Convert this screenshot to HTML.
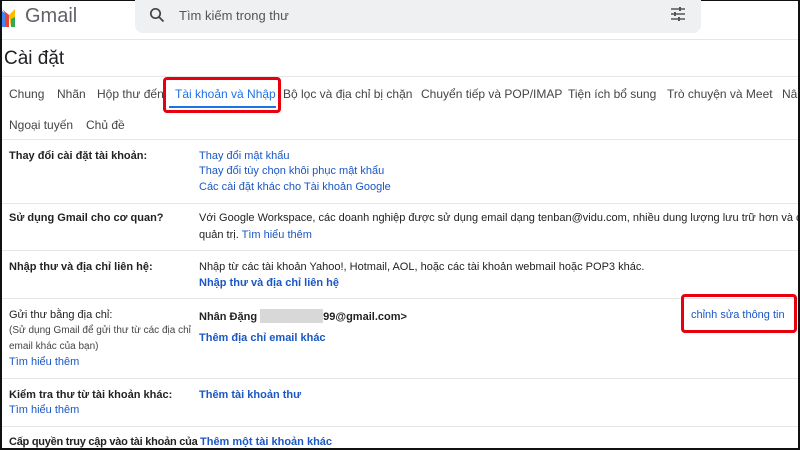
<!DOCTYPE html>
<html><head><meta charset="utf-8"><style>
*{margin:0;padding:0;box-sizing:border-box}
body{width:800px;height:450px;overflow:hidden;background:#fff;font-family:"Liberation Sans",Arial,sans-serif;position:relative;color:#202124}
.a{position:absolute;white-space:nowrap}
.hr{position:absolute;left:0;width:800px;height:1px;background:#e6e6e6}
.lb{font-size:11px;font-weight:bold;color:#222}
.lk{font-size:11px;color:#1a57c4}
.bl{font-size:11px;color:#1a57c4;font-weight:bold}
.sm{font-size:10px;color:#444}
.tab{font-size:12px;color:#444;top:87px}
.tab2{font-size:12px;color:#444;top:118px}
</style></head><body>
<div class="a" style="left:0;top:0;width:800px;height:1px;background:#111"></div>
<svg class="a" style="left:2px;top:5px" width="14" height="22" viewBox="0 0 14 22"><path d="M0 4 L7 10 L7 22 L3 22 L3 8 Z" fill="#ea4335"/><path d="M7 10 L13 4 L13 22 L9 22 Z" fill="#fbbc04"/><path d="M9 22 L13 22 L13 12 L9 14Z" fill="#34a853"/><path d="M0 6 L0 22 L3 22 L3 8Z" fill="#4285f4"/></svg>
<div class="a" style="left:25px;top:5px;font-size:20px;color:#5f6368">Gmail</div>
<div class="a" style="left:135px;top:0;width:566px;height:33px;background:#eef0f2;border-radius:0 0 8px 8px"></div>
<svg class="a" style="left:149px;top:7px" width="16" height="16" viewBox="0 0 16 16"><circle cx="6.5" cy="6.5" r="4.7" fill="none" stroke="#444" stroke-width="1.7"/><path d="M10 10 L14.5 14.5" stroke="#444" stroke-width="1.8"/></svg>
<div class="a" style="left:179px;top:8px;font-size:13px;color:#555">Tìm kiếm trong thư</div>
<svg class="a" style="left:670px;top:7px" width="16" height="14" viewBox="0 0 16 14"><g stroke="#555" stroke-width="1.5"><path d="M1 2h14M1 7h14M1 12h14"/></g><g stroke="#555" stroke-width="2"><path d="M10 0v4M5 5v4M9 10v4"/></g></svg>
<div class="hr" style="top:39px"></div>
<div class="a" style="left:4px;top:48px;font-size:19px;color:#202124">Cài đặt</div>
<div class="hr" style="top:76px"></div>
<div class="a tab" style="left:9px">Chung</div>
<div class="a tab" style="left:57px">Nhãn</div>
<div class="a tab" style="left:97px">Hộp thư đến</div>
<div class="a tab" style="left:175px;color:#1a73e8">Tài khoản và Nhập</div>
<div class="a" style="left:169px;top:106px;width:107px;height:2px;background:#1a73e8"></div>
<div class="a" style="left:163px;top:77px;width:118px;height:36px;border:3px solid #e8000e;border-radius:4px"></div>
<div class="a tab" style="left:283px">Bộ lọc và địa chỉ bị chặn</div>
<div class="a tab" style="left:421px">Chuyển tiếp và POP/IMAP</div>
<div class="a tab" style="left:568px">Tiện ích bổ sung</div>
<div class="a tab" style="left:667px">Trò chuyện và Meet</div>
<div class="a tab" style="left:782px">Nâng</div>
<div class="a tab2" style="left:9px">Ngoại tuyến</div>
<div class="a tab2" style="left:86px">Chủ đề</div>
<div class="hr" style="top:139px"></div>

<div class="a lb" style="left:9px;top:150px">Thay đổi cài đặt tài khoản:</div>
<div class="a lk" style="left:199px;top:150px">Thay đổi mật khẩu</div>
<div class="a lk" style="left:199px;top:165px">Thay đổi tùy chọn khôi phục mật khẩu</div>
<div class="a lk" style="left:199px;top:181px">Các cài đặt khác cho Tài khoản Google</div>
<div class="hr" style="top:203px"></div>

<div class="a lb" style="left:9px;top:212px">Sử dụng Gmail cho cơ quan?</div>
<div class="a" style="left:199px;top:212px;font-size:11px;color:#222">Với Google Workspace, các doanh nghiệp được sử dụng email dạng tenban@vidu.com, nhiều dung lượng lưu trữ hơn và c</div>
<div class="a" style="left:199px;top:229px;font-size:11px;color:#222">quản trị. <span style="color:#1a57c4">Tìm hiểu thêm</span></div>
<div class="hr" style="top:250px"></div>

<div class="a lb" style="left:9px;top:261px">Nhập thư và địa chỉ liên hệ:</div>
<div class="a" style="left:199px;top:261px;font-size:11px;color:#222">Nhập từ các tài khoản Yahoo!, Hotmail, AOL, hoặc các tài khoản webmail hoặc POP3 khác.</div>
<div class="a bl" style="left:199px;top:277px">Nhập thư và địa chỉ liên hệ</div>
<div class="hr" style="top:298px"></div>

<div class="a" style="left:9px;top:309px;font-size:11px;color:#222">Gửi thư bằng địa chỉ:</div>
<div class="a sm" style="left:9px;top:325px">(Sử dụng Gmail để gửi thư từ các địa chỉ</div>
<div class="a sm" style="left:9px;top:341px">email khác của bạn)</div>
<div class="a lk" style="left:9px;top:356px">Tìm hiểu thêm</div>
<div class="a" style="left:199px;top:309px;font-size:11px;font-weight:bold;color:#222">Nhân Đặng <span style="display:inline-block;width:63px;height:14px;background:#d8d8d8;vertical-align:-3px"></span>99@gmail.com&gt;</div>
<div class="a bl" style="left:199px;top:332px">Thêm địa chỉ email khác</div>
<div class="a lk" style="left:691px;top:309px">chỉnh sửa thông tin</div>
<div class="a" style="left:681px;top:294px;width:116px;height:39px;border:3px solid #e8000e;border-radius:4px"></div>
<div class="hr" style="top:378px"></div>

<div class="a lb" style="left:9px;top:389px">Kiểm tra thư từ tài khoản khác:</div>
<div class="a lk" style="left:9px;top:404px">Tìm hiểu thêm</div>
<div class="a bl" style="left:199px;top:389px">Thêm tài khoản thư</div>
<div class="hr" style="top:426px"></div>

<div class="a lb" style="left:9px;top:436px;letter-spacing:-0.25px">Cấp quyền truy cập vào tài khoản của</div>
<div class="a bl" style="left:200px;top:436px">Thêm một tài khoản khác</div>
<div class="a" style="left:0;top:448px;width:800px;height:2px;background:#111"></div>
<div class="a" style="left:0;top:0;width:2px;height:450px;background:#111"></div>
<div class="a" style="left:798px;top:0;width:2px;height:450px;background:#111"></div>
</body></html>
